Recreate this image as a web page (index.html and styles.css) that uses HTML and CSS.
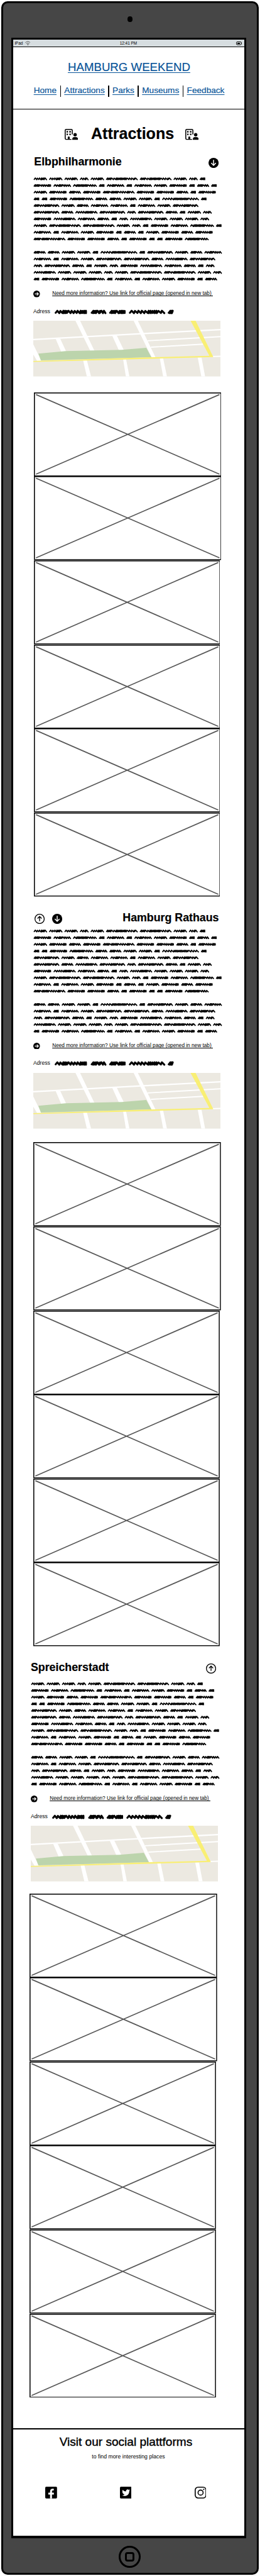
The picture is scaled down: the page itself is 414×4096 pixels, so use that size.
FILE: index.html
```html
<!DOCTYPE html>
<html lang="en">
<head>
<meta charset="utf-8">
<title>Hamburg Weekend</title>
<link rel="stylesheet" href="styles.css">
</head>
<body>
<svg class="defs" aria-hidden="true">
  <symbol id="building" viewBox="0 0 32 26">
    <path d="M18 13V3.500Q18 1.200 15.500 1.200H3.500Q1.200 1.200 1.200 3.500V22.500Q1.200 24.800 3.500 24.800H16" fill="none" stroke="#000" stroke-width="2.300"/>
    <path d="M4.500 5h3.300v3.500H4.500zM11 5h3.600v3.500H11zM4.500 11h3.300v3.500H4.500zM11 11h3.600v3.500H11zM7.300 25v-5.500q0-1.800 2.300-1.800t2.300 1.800V25z"/>
    <circle cx="24.700" cy="13.800" r="4"/>
    <path d="M17.800 26v-1.500q.5-5 5-5h4q4.700 0 5.200 5V26z"/>
  </symbol>
  <symbol id="down" viewBox="0 0 24 24"><circle cx="12" cy="12" r="12"/><path d="M12 5.500V17.500M7 12.800l5 5 5-5" fill="none" stroke="#fff" stroke-width="2.200" stroke-linecap="round" stroke-linejoin="round"/></symbol>
  <symbol id="up" viewBox="0 0 24 24"><circle cx="12" cy="12" r="11" fill="none" stroke="#000" stroke-width="2"/><path d="M12 17.500V6.500M7 11.200l5-5 5 5" fill="none" stroke="#000" stroke-width="2"/></symbol>
  <symbol id="right" viewBox="0 0 16 16"><circle cx="8" cy="8" r="8"/><path d="M3.500 8H12M8.400 4.200L12.200 8l-3.800 3.800" fill="none" stroke="#fff" stroke-width="1.800"/></symbol>
  <symbol id="photo" viewBox="0 0 445 199" preserveAspectRatio="none"><rect x="1.200" y="1.200" width="442.600" height="196.600" fill="#fff" stroke="#000" stroke-width="2.300"/><path d="M5 5L440 193.500M440 5L5 193.500" stroke="#585858" stroke-width="2.500"/></symbol>
  <symbol id="map" viewBox="0 0 444 132">
    <path fill="#ece9e1" d="M0 0H444V132H0z"/>
    <path fill="none" stroke="#fff" stroke-width="3.600" d="M0 44.500L263 30.400L444 21"/>
    <path fill="none" stroke="#fff" stroke-width="2.800" d="M271 47.500L444 37.500M279 62.500L403 55.500M424 84.700L444 84.200"/>
    <path fill="#fff" d="M100 0H111L145 71H135zM238 0H248L290 87H281zM53 43H64L78 73H66zM187 35H198L215 70H203zM0 56V80L9 95H19zM118 93H127L137 132H127zM213 91H220L228 132H219.500zM300 89H308L317 132H308zM390 87H399L407.500 132H398.500z"/>
    <path fill="#bcd4ac" d="M12 78L77 72L210 69L268 64L280 86.500L18 94z"/>
    <path fill="#f9ef74" d="M0 95.200L280 86.500L417 83V82L373 0H385L427 86L280 90L0 97.500z"/>
  </symbol>
  <symbol id="copy" viewBox="0 0 450 253"><path id="copy-ink" class="ink"/></symbol>
  <symbol id="address" viewBox="0 0 286 16"><path id="address-ink" class="ink ink-bold"/></symbol>
</svg>

<div class="device">
  <div class="camera"></div>
  <div class="screen">
    <div class="status">
      <span class="carrier">iPad
        <svg viewBox="0 0 13 11" fill="none" stroke="#222" stroke-width="1"><path d="M.5 4.500Q6.500-1.500 12.500 4.500M3 7Q6.500 3.500 10 7"/><circle cx="6.500" cy="9" r=".7" fill="#000"/></svg>
      </span>
      <span class="time">12:41 PM</span>
      <svg class="battery" viewBox="0 0 14 9"><rect x=".8" y=".8" width="11.400" height="7" rx="2" fill="none" stroke="#000" stroke-width="1.400"/><path d="M3 2.800h6v3.200H3zM12.500 2.500h1.300v3.500h-1.300z"/></svg>
    </div>
    <header class="header">
      <a class="brand">HAMBURG WEEKEND</a>
      <nav class="nav"><a>Home</a><i></i><a>Attractions</a><i></i><a>Parks</a><i></i><a>Museums</a><i></i><a>Feedback</a></nav>
    </header>
    <div class="title">
      <svg><use href="#building"/></svg><h1>Attractions</h1><svg><use href="#building"/></svg>
    </div>

    <section class="place first">
      <div class="place-head"><h2>Elbphilharmonie</h2><svg><use href="#down"/></svg></div>
      <svg class="copy"><use href="#copy"/></svg>
      <div class="more"><svg><use href="#right"/></svg><a>Need more information? Use link for official page (opened in new tab)&nbsp;</a></div>
      <div class="address"><span>Adress</span><svg><use href="#address"/></svg></div>
      <svg class="map"><use href="#map"/></svg>
      <div class="photos"><svg><use href="#photo"/></svg><svg><use href="#photo"/></svg><svg><use href="#photo"/></svg><svg><use href="#photo"/></svg><svg><use href="#photo"/></svg><svg><use href="#photo"/></svg></div>
    </section>

    <section class="place second">
      <div class="place-head"><span class="jumps"><svg><use href="#up"/></svg><svg><use href="#down"/></svg></span><h2>Hamburg Rathaus</h2></div>
      <svg class="copy"><use href="#copy"/></svg>
      <div class="more"><svg><use href="#right"/></svg><a>Need more information? Use link for official page (opened in new tab)&nbsp;</a></div>
      <div class="address"><span>Adress</span><svg><use href="#address"/></svg></div>
      <svg class="map"><use href="#map"/></svg>
      <div class="photos"><svg><use href="#photo"/></svg><svg><use href="#photo"/></svg><svg><use href="#photo"/></svg><svg><use href="#photo"/></svg><svg><use href="#photo"/></svg><svg><use href="#photo"/></svg></div>
    </section>

    <section class="place third">
      <div class="place-head"><h2>Spreicherstadt</h2><svg><use href="#up"/></svg></div>
      <svg class="copy"><use href="#copy"/></svg>
      <div class="more"><svg><use href="#right"/></svg><a>Need more information? Use link for official page (opened in new tab)&nbsp;</a></div>
      <div class="address"><span>Adress</span><svg><use href="#address"/></svg></div>
      <svg class="map"><use href="#map"/></svg>
      <div class="photos"><svg><use href="#photo"/></svg><svg><use href="#photo"/></svg><svg><use href="#photo"/></svg><svg><use href="#photo"/></svg><svg><use href="#photo"/></svg><svg><use href="#photo"/></svg></div>
    </section>

    <footer class="footer">
      <h3>Visit our social plattforms</h3>
      <p>to find more interesting places</p>
      <div class="social">
        <svg viewBox="0 0 28 28"><rect width="28" height="28" rx="2.500"/><path fill="#fff" d="M11.500 28V18.500H7.300V14.200H11.500V11.500Q11.500 4.800 17.500 4.800H20.300V8.800H18.300Q16 8.800 16 11V14.200H20.500V18.500H16V28z"/></svg>
        <svg viewBox="0 0 28 28"><rect width="28" height="28" rx="2.500"/><path fill="#fff" transform="translate(3.900 3.800) scale(.87)" d="M23 3a10.900 10.900 0 0 1-3.140 1.530 4.480 4.480 0 0 0-7.860 3v1A10.660 10.660 0 0 1 3 4s-4 9 5 13a11.640 11.640 0 0 1-7 2c9 5 20 0 20-11.500a4.500 4.500 0 0 0-.08-.83A7.720 7.720 0 0 0 23 3z"/></svg>
        <svg viewBox="0 0 28 28" fill="none" stroke="#000" stroke-width="2.400"><rect x="1.200" y="1.200" width="25.600" height="25.600" rx="7"/><circle cx="14" cy="14" r="6"/><circle cx="21.500" cy="6.500" r="1.700" fill="#000" stroke="none"/></svg>
      </div>
    </footer>
  </div>
  <div class="home"><div></div></div>
</div>
<script src="ink.js"></script>
</body>
</html>
```
FILE: styles.css
```css
* { box-sizing: border-box; margin: 0; padding: 0; }
/* 1rem = 100 design units */
html { background: #fff; font-size: 67.15px; }
body {
  padding: 2px 0 0 0.024rem;
  font-family: "Liberation Sans", Arial, sans-serif;
  color: #000;
}
svg { display: block; flex: none; overflow: hidden; }
.defs { position: absolute; width: 0; height: 0; }
.ink { fill: none; stroke: #000; stroke-width: 2.7; stroke-linejoin: round; stroke-linecap: round; }
.ink-bold { stroke-width: 4.6; }

.device {
  width: 6.114rem;
  height: 60.945rem;
  background: #464646;
  border: 0.05rem solid #000;
  border-radius: 0.15rem;
  display: flex;
  flex-direction: column;
}
.camera { flex: none; width: 0.11rem; height: 0.13rem; border-radius: 50%; background: #000; margin: 0.315rem auto 0.375rem; }
.screen {
  width: 5.57rem;
  height: 59.215rem;
  margin-left: 0.206rem;
  flex: none;
  background: #fff;
  border: 0.05rem solid #000;
  border-bottom-width: 0.06rem;
}

.status {
  height: 0.185rem;
  background: #d6dde0;
  border-bottom: 0.022rem solid #000;
  display: grid;
  grid-template-columns: 1fr auto 1fr;
  align-items: center;
  padding: 0 0.06rem 0 0.03rem;
  font-size: 0.096rem;
}
.carrier { display: flex; align-items: center; gap: 0.05rem; }
.carrier svg { width: 0.13rem; height: 0.11rem; }
.battery { width: 0.14rem; height: 0.09rem; justify-self: end; }

.header {
  height: 1.465rem;
  border-bottom: 0.022rem solid #000;
  padding-top: 0.31rem;
}
.header a { color: #0a5599; text-decoration: underline; }
.header .brand {
  display: block;
  text-align: center;
  font-size: 0.278rem;
  line-height: 0.32rem;
  text-decoration-thickness: 0.018rem;
  text-underline-offset: 0.035rem;
  -webkit-text-stroke: 0.003rem #0a5599;
}
.nav {
  display: flex;
  gap: 0.082rem;
  margin-top: 0.266rem;
  padding-left: 0.48rem;
  font-size: 0.203rem;
  line-height: 0.25rem;
}
.header .nav a { text-underline-offset: 0.025rem; text-decoration-thickness: 0.016rem; -webkit-text-stroke: 0.003rem #0a5599; }
.nav i { width: 0.02rem; height: 0.27rem; background: #000; }

.title { display: flex; height: 0.42rem; margin-top: 0.356rem; padding-left: 1.21rem; }
.title svg { width: 0.32rem; height: 0.26rem; margin-top: 0.114rem; }
.title h1 { width: 1.975rem; margin: 0 0.255rem 0 0.31rem; font-size: 0.373rem; line-height: 0.42rem; white-space: nowrap; -webkit-text-stroke: 0.003rem #000; }

.place { width: 4.44rem; margin-left: 0.47rem; padding-top: 0.348rem; }
.place.first { padding-top: 0.317rem; }
.place.third { margin-left: 0.41rem; }
.place-head { display: flex; justify-content: space-between; align-items: center; height: 0.3rem; padding: 0 0.05rem 0 0.02rem; }
.place-head svg { width: 0.24rem; height: 0.24rem; margin-top: 0.05rem; }
.second .place-head { padding: 0 0.04rem 0 0.03rem; }
.third .place-head { padding: 0 0.05rem 0 0; }
.jumps { display: flex; gap: 0.17rem; }
.place h2 { font-size: 0.265rem; line-height: 0.3rem; -webkit-text-stroke: 0.003rem #000; }
.place .copy { width: 4.5rem; height: 2.53rem; margin-top: 0.18rem; }
.second .copy { margin-top: 0.092rem; }
.third .copy { margin-top: 0.162rem; }
.more { display: flex; gap: 0.29rem; height: 0.16rem; margin-top: 0.187rem; }
.more svg { width: 0.16rem; height: 0.16rem; }
.more a { font-size: 0.123rem; line-height: 0.16rem; white-space: nowrap; text-decoration: underline; text-decoration-thickness: 0.015rem; text-underline-offset: 0.018rem; text-decoration-skip-ink: none; }
.address { display: flex; height: 0.16rem; margin-top: 0.255rem; font-size: 0.129rem; line-height: 0.16rem; }
.address span { width: 0.5rem; }
.address svg { width: 2.86rem; height: 0.16rem; }
.map { width: 4.44rem; height: 1.32rem; margin-top: 0.145rem; }
.photos { margin: 0.373rem 0 0 0.008rem; }
.second .photos { margin: 0.323rem 0 0 -0.003rem; }
.third .photos { margin: 0.28rem 0 0 -0.033rem; }
.photos svg { width: 4.422rem; height: 1.99rem; }
.photos svg:nth-child(-n+2) { width: 4.45rem; }

.footer { height: 2.54rem; margin-top: 0.73rem; border-top: 0.03rem solid #000; padding-top: 0.129rem; text-align: center; }
.footer h3 { margin-right: 0.15rem; font-size: 0.284rem; line-height: 0.32rem; font-weight: 400; -webkit-text-stroke: 0.006rem #000; }
.footer p { margin: 0.116rem 0.03rem 0 0; font-size: 0.13rem; line-height: 0.16rem; }
.social { display: flex; justify-content: space-between; margin-top: 0.625rem; padding: 0 0.91rem 0 0.75rem; }
.social svg { width: 0.28rem; height: 0.28rem; }

.home {
  flex: none;
  width: 0.52rem;
  height: 0.52rem;
  margin: 0.18rem auto 0;
  border: 0.05rem solid #000;
  border-radius: 50%;
  display: flex;
  align-items: center;
  justify-content: center;
}
.home div { width: 0.22rem; height: 0.22rem; border: 0.05rem solid #000; border-radius: 0.06rem; }
```
FILE: ink.js
```js
// Word shapes: advance width, then the rhythm of the pen (o = open stroke, d = dense stroke).
const words = {
  A: [36.5, "ooodddo"], B: [25.5, "oodo"], C: [80.1, "dddooddddddddooodo"], D: [18.9, "dddd"],
  E: [47.1, "ddddooooddd"], F: [46.3, "oodddoooo"], G: [61.3, "odddddddddoooo"], H: [33.3, "ddddooo"],
  I: [80.1, "ddddodddddooooddoo"], J: [92, "ooooddddddddddoooo"], K: [65.6, "dddooodddddoodo"],
  L: [57.3, "ooooddddddoo"]
};
const lines = [
  "AAABACCABD", "EFGDFDFAEDHD", "AEHEIEEHDE", "DDEGHHAADJD", "KAHFFDFAK",
  "KHLKBKHDAB", "ELFHDBLAAAB", "ACCABDEFGD", "FDFAEDHDAEHE", "IEEHDEDDEG", "",
  "HHAADJDKAHF", "FDFAKKHLK", "BKHDABELFHDB", "LAAABACCAB", "DEFGDFDFAEDH"
];

function scribble(x, y, width, rhythm, amp, lean) {
  const sizes = [...rhythm].map(c => (c === "o" ? 1.75 : 1));
  const unit = (width - lean * 0.5) / sizes.reduce((a, b) => a + b, 0);
  let d = `M${x.toFixed(1)} ${(y + amp * 0.7).toFixed(1)}`;
  sizes.forEach((s, i) => {
    const drift = i % 3 === 1 ? 0.4 : 0;
    d += `L${(x + lean).toFixed(1)} ${(y - amp + drift).toFixed(1)}`;
    x += s * unit;
    d += `L${(x + lean * (s > 1 ? 0.4 : 0)).toFixed(1)} ${(y + amp - drift).toFixed(1)}`;
  });
  return d;
}

let copy = "";
lines.forEach((line, row) => {
  let x = 2.2;
  for (const key of line) {
    const [advance, rhythm] = words[key];
    copy += scribble(x, 8 + row * 15.82, advance - 7, rhythm, 2, 2.6);
    x += advance;
  }
});
document.getElementById("copy-ink").setAttribute("d", copy);

const address = [[2.3, 74, "oodddoooodddd"], [87.8, 33, "dddodoo"], [131.5, 36.5, "dddodddd"], [178.5, 82, "ooooodddddoo"], [270.6, 9.5, "dddd"]];
document.getElementById("address-ink").setAttribute("d",
  address.map(([x, w, rhythm]) => scribble(x, 9, w, rhythm, 2.8, 4)).join(""));
```
